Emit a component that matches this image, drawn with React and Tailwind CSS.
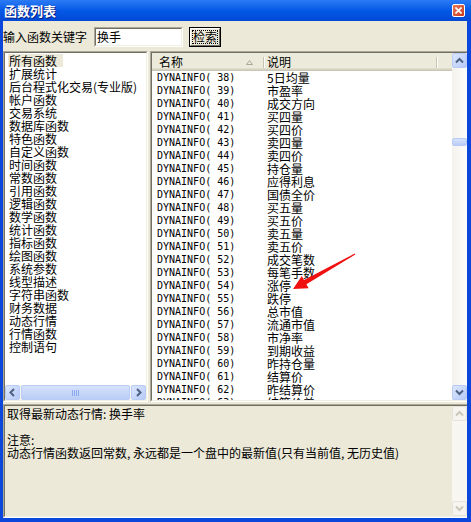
import React from 'react';

const categories = [
  '所有函数', '扩展统计', '后台程式化交易(专业版)', '帐户函数', '交易系统', '数据库函数',
  '特色函数', '自定义函数', '时间函数', '常数函数', '引用函数', '逻辑函数', '数学函数',
  '统计函数', '指标函数', '绘图函数', '系统参数', '线型描述', '字符串函数', '财务数据',
  '动态行情', '行情函数', '控制语句',
];

const rows = [
  [38, '5日均量'], [39, '市盈率'], [40, '成交方向'], [41, '买四量'], [42, '买四价'],
  [43, '卖四量'], [44, '卖四价'], [45, '持仓量'], [46, '应得利息'], [47, '国债全价'],
  [48, '买五量'], [49, '买五价'], [50, '卖五量'], [51, '卖五价'], [52, '成交笔数'],
  [53, '每笔手数'], [54, '涨停'], [55, '跌停'], [56, '总市值'], [57, '流通市值'],
  [58, '市净率'], [59, '到期收益'], [60, '昨持仓量'], [61, '结算价'], [62, '昨结算价'],
  [63, '结算价差'],
];

// chevron inside the little xp scroll buttons
const Chevron = ({ dir, color = '#4D6185' }) => {
  const d = {
    up: 'M1 6.5 L4.5 3 L8 6.5',
    down: 'M1 2.5 L4.5 6 L8 2.5',
    left: 'M6 1 L2.5 4.5 L6 8',
    right: 'M3 1 L6.5 4.5 L3 8',
  }[dir];
  return (
    <svg width="9" height="9" viewBox="0 0 9 9">
      <path d={d} stroke={color} strokeWidth="2" fill="none" />
    </svg>
  );
};

const ScrollBtn = ({ dir }) => (
  <div className="flex h-[15px] w-[15px] shrink-0 items-center justify-center rounded-[2px] border border-[#B8CBF5] bg-linear-to-br from-[#DCE6FD] to-[#B7CAF6]">
    <Chevron dir={dir} />
  </div>
);

const DeadBtn = ({ dir }) => (
  <div className="flex h-[15px] w-[15px] shrink-0 items-center justify-center rounded-[2px] border border-[#E6E4DA] bg-[#F5F4EF]">
    <Chevron dir={dir} color="#CAC8BB" />
  </div>
);

const App = () => {
  return (
    <div className="relative flex h-[522px] w-[471px] flex-col overflow-hidden bg-[#0A47DA] font-['Noto_Sans_CJK_SC',sans-serif] text-[12px] text-black">
      {/* title bar */}
      <div className="flex h-[21px] shrink-0 items-center justify-between bg-linear-to-b from-[#2B7BF5] via-[#0458E6] to-[#0249D6] pl-[4px] pr-[6px]">
        <span className="text-[13px] font-bold leading-none text-white [text-shadow:1px_1px_#0A1E80]">函数列表</span>
        <div className="flex h-[13px] w-[13px] items-center justify-center rounded-[2px] border border-white bg-linear-to-br from-[#E8795A] to-[#C6381A]">
          <svg width="7" height="7" viewBox="0 0 7 7">
            <path d="M0.5 0.5 L6.5 6.5 M6.5 0.5 L0.5 6.5" stroke="white" strokeWidth="1.6" />
          </svg>
        </div>
      </div>

      <div className="flex min-h-0 flex-1 pl-[3px] pr-[4px] pb-[4px]">
        <div className="flex flex-1 flex-col bg-[#ECE9D8]">
          {/* search row */}
          <div className="flex h-[30px] shrink-0 items-center pt-[2px]">
            <span className="w-[84px] whitespace-nowrap leading-none">输入函数关键字</span>
            <div className="ml-[7px] h-[20px] w-[89px] border border-t-[#ACA899] border-l-[#ACA899] border-r-white border-b-white">
              <div className="flex h-full items-center border border-t-[#716F64] border-l-[#716F64] border-r-[#F1EFE2] border-b-[#F1EFE2] bg-white pl-[1px]">
                换手
              </div>
            </div>
            <div className="ml-[6px] h-[20px] w-[32px] border border-black">
              <div className="flex h-full items-center justify-center border border-t-white border-l-white border-r-[#716F64] border-b-[#716F64] bg-[#ECE9D8]">
                <span className="whitespace-nowrap border border-dotted border-black leading-[12px]">检索</span>
              </div>
            </div>
          </div>

          {/* lists */}
          <div className="flex h-[351px] shrink-0 gap-[2px]">
            <div className="w-[145px] border border-t-[#ACA899] border-l-[#ACA899] border-r-white border-b-white">
              <div className="flex h-full flex-col border border-t-[#716F64] border-l-[#716F64] border-r-[#F1EFE2] border-b-[#F1EFE2] bg-white">
                <div className="flex-1 overflow-hidden pl-[3px] pt-[1px]">
                  {categories.map((c, i) => (
                    <div key={c} className="h-[13px] whitespace-nowrap leading-[13px]">
                      <span className={i === 0 ? 'inline-block bg-[#ECE9D8] pl-[1px] pr-[6px]' : 'inline-block pl-[1px]'}>{c}</span>
                    </div>
                  ))}
                </div>
                <div className="flex h-[15px] shrink-0 bg-[#F7F6F1]">
                  <ScrollBtn dir="left" />
                  <div className="mx-[1px] flex flex-1 items-center justify-center gap-[1px] rounded-[2px] border border-[#B8CBF5] bg-linear-to-b from-[#D6E2FC] to-[#BACDF7]">
                    <div className="h-[6px] w-[1px] bg-[#8CA9EC]" />
                    <div className="h-[6px] w-[1px] bg-[#8CA9EC]" />
                    <div className="h-[6px] w-[1px] bg-[#8CA9EC]" />
                    <div className="h-[6px] w-[1px] bg-[#8CA9EC]" />
                  </div>
                  <ScrollBtn dir="right" />
                </div>
              </div>
            </div>

            <div className="flex-1 border border-r-0 border-t-[#ACA899] border-l-[#ACA899] border-b-white">
              <div className="flex h-full border border-r-0 border-t-[#716F64] border-l-[#716F64] border-b-[#F1EFE2] bg-white">
                <div className="flex min-w-0 flex-1 flex-col">
                  <div className="flex h-[18px] shrink-0 items-center bg-[#EBEADB] shadow-[inset_0_-1px_#CBC7B8,inset_0_-2px_#D6D2C2,inset_0_-3px_#E2DECD]">
                    <div className="flex w-[111px] items-center justify-between pl-[7px] pr-[10px]">
                      <span className="leading-none">名称</span>
                      <svg width="7" height="5" viewBox="0 0 7 5">
                        <path d="M0.5 4.5 L3.5 0.5 L6.5 4.5 Z" fill="none" stroke="#ACA899" />
                      </svg>
                    </div>
                    <div className="h-[11px] w-[1px] bg-[#C7C5B2]" />
                    <div className="h-[11px] w-[1px] bg-white" />
                    <div className="w-[171px] pl-[2px] leading-none">说明</div>
                    <div className="h-[11px] w-[1px] bg-[#C7C5B2]" />
                    <div className="h-[11px] w-[1px] bg-white" />
                  </div>
                  <div className="flex-1 overflow-hidden">
                    {rows.map(([n, d]) => (
                      <div key={n} className="flex h-[13px] items-center">
                        <span className="w-[115px] whitespace-pre pl-[5px] font-['DejaVu_Sans_Mono',monospace] text-[10px] leading-none">{`DYNAINFO( ${n})`}</span>
                        <span className="leading-[13px]">{d}</span>
                      </div>
                    ))}
                  </div>
                </div>
                <div className="flex w-[15px] shrink-0 flex-col bg-linear-to-r from-[#F3F1EC] to-[#FEFEFB]">
                  <ScrollBtn dir="up" />
                  <div className="h-[70px]" />
                  <div className="h-[8px] rounded-[2px] border border-[#B8CBF5] bg-linear-to-b from-[#D6E2FC] to-[#BACDF7]" />
                  <div className="flex-1" />
                  <ScrollBtn dir="down" />
                </div>
              </div>
            </div>
          </div>

          {/* description */}
          <div className="mt-[2px] flex-1 border border-r-0 border-t-[#ACA899] border-l-[#ACA899] border-b-white">
            <div className="flex h-full border border-r-0 border-t-[#716F64] border-l-[#716F64] border-b-[#F1EFE2]">
              <div className="flex-1 whitespace-nowrap pl-[2px] pt-[1px] leading-[13px]">
                <div>取得最新动态行情: 换手率</div>
                <div className="h-[13px]" />
                <div>注意:</div>
                <div>动态行情函数返回常数, 永远都是一个盘中的最新值(只有当前值, 无历史值)</div>
              </div>
              <div className="flex w-[15px] shrink-0 flex-col bg-[#F7F6F1]">
                <DeadBtn dir="up" />
                <div className="flex-1" />
                <DeadBtn dir="down" />
              </div>
            </div>
          </div>
        </div>
      </div>

      {/* red annotation arrow */}
      <svg className="pointer-events-none absolute left-0 top-0" width="471" height="522" viewBox="0 0 471 522">
        <polygon
          points="355.3,254.4 306.4,284.3 308.6,288.2 293,289 301.8,276 304,279.9 354.7,253.6"
          fill="#F01010"
        />
      </svg>
    </div>
  );
};

export default App;
